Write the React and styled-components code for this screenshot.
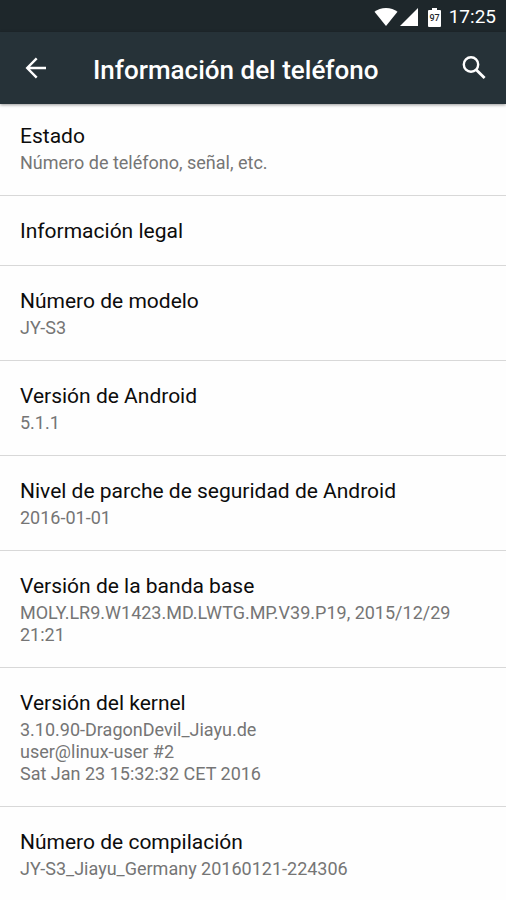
import React from "react";
import styled, { createGlobalStyle } from "styled-components";

const GlobalStyle = createGlobalStyle`
  * {
    box-sizing: border-box;
  }

  body {
    margin: 0;
    background-color: #fefefe;
    font-family: Roboto, "Noto Sans", sans-serif;
  }
`;

const S = {
  Wrapper: styled.div`
    width: 100%;
    min-height: 100vh;
    background-color: #fefefe;
  `,
  StatusBar: styled.div`
    height: 32px;
    padding: 2px 10px 0;
    display: flex;
    align-items: center;
    justify-content: flex-end;
    background-color: #1e272b;
    color: #ffffff;
  `,
  StatusIcon: styled.svg`
    display: block;
    flex: none;
    margin-right: ${(props) => props.$gap || 0}px;
  `,
  Clock: styled.time`
    font-size: 19px;
    line-height: 30px;
  `,
  Header: styled.header`
    height: 72px;
    padding: 0 16px 0 20px;
    display: flex;
    align-items: center;
    background-color: #263238;
    color: #ffffff;
    box-shadow: 0 1px 3px rgba(0, 0, 0, 0.4);
  `,
  IconButton: styled.button`
    flex: none;
    width: 32px;
    height: 32px;
    padding: 0;
    border: 0;
    display: flex;
    align-items: center;
    justify-content: center;
    background: none;
    color: inherit;
    cursor: pointer;
  `,
  Title: styled.h1`
    flex: 1;
    margin: 0 0 0 41px;
    padding-top: 3px;
    font-size: 26px;
    font-weight: 500;
    line-height: 32px;
  `,
  List: styled.ul`
    margin: 0;
    padding: 0;
    list-style: none;
  `,
  Item: styled.li`
    padding: 21px 20px 20px;
    border-bottom: 1px solid #d8d8d8;

    &:first-child {
      padding-top: 18px;
    }

    &:last-child {
      padding-bottom: 16px;
      border-bottom: 0;
    }
  `,
  ItemTitle: styled.div`
    color: #0c0c0c;
    font-size: 21px;
    line-height: 28px;
  `,
  ItemText: styled.div`
    padding: 2px 0 1px;
    color: #757575;
    font-size: 18px;
    line-height: 22px;
    white-space: pre-line;
  `,
};

const ITEMS = [
  { title: "Estado", text: "Número de teléfono, señal, etc." },
  { title: "Información legal" },
  { title: "Número de modelo", text: "JY-S3" },
  { title: "Versión de Android", text: "5.1.1" },
  { title: "Nivel de parche de seguridad de Android", text: "2016-01-01" },
  {
    title: "Versión de la banda base",
    text: "MOLY.LR9.W1423.MD.LWTG.MP.V39.P19, 2015/12/29 21:21",
  },
  {
    title: "Versión del kernel",
    text: "3.10.90-DragonDevil_Jiayu.de\nuser@linux-user #2\nSat Jan 23 15:32:32 CET 2016",
  },
  { title: "Número de compilación", text: "JY-S3_Jiayu_Germany 20160121-224306" },
];

function StatusBar() {
  return (
    <S.StatusBar>
      <S.StatusIcon $gap={2} width="24" height="18" viewBox="0 0 24 18" aria-hidden="true">
        <path d="M12 18 0.5 3.8C3.5 1.4 7.5 0 12 0s8.500 1.400 11.500 3.800z" fill="currentColor" />
      </S.StatusIcon>
      <S.StatusIcon $gap={10} width="18" height="18" viewBox="0 0 18 18" aria-hidden="true">
        <path d="M0 18 18 0v18z" fill="currentColor" />
      </S.StatusIcon>
      <S.StatusIcon $gap={8} width="13" height="19" viewBox="0 0 13 19" role="img" aria-label="97">
        <path d="M4 0h5v2h3a1 1 0 0 1 1 1v15a1 1 0 0 1-1 1H1a1 1 0 0 1-1-1V3a1 1 0 0 1 1-1h3z" fill="currentColor" />
        <text x="6.500" y="13" textAnchor="middle" fontSize="9" fontWeight="500" fill="#1e272b">
          97
        </text>
      </S.StatusIcon>
      <S.Clock>17:25</S.Clock>
    </S.StatusBar>
  );
}

function Header({ title }) {
  return (
    <S.Header>
      <S.IconButton type="button" aria-label="Atrás">
        <svg width="32" height="32" viewBox="0 0 32 32" fill="none" stroke="currentColor" strokeWidth="2.400">
          <path d="M26 16H7.500M16.700 6.300 7.200 16l9.500 9.700" />
        </svg>
      </S.IconButton>
      <S.Title>{title}</S.Title>
      <S.IconButton type="button" aria-label="Buscar">
        <svg width="32" height="32" viewBox="0 0 32 32" fill="none" stroke="currentColor">
          <circle cx="13" cy="12.500" r="7.200" strokeWidth="2.400" />
          <path d="m18.200 17.700 8.400 8.400" strokeWidth="2.800" />
        </svg>
      </S.IconButton>
    </S.Header>
  );
}

function App() {
  return (
    <S.Wrapper>
      <GlobalStyle />
      <StatusBar />
      <Header title="Información del teléfono" />
      <S.List>
        {ITEMS.map((item) => (
          <S.Item key={item.title}>
            <S.ItemTitle>{item.title}</S.ItemTitle>
            {item.text && <S.ItemText>{item.text}</S.ItemText>}
          </S.Item>
        ))}
      </S.List>
    </S.Wrapper>
  );
}

export default App;
